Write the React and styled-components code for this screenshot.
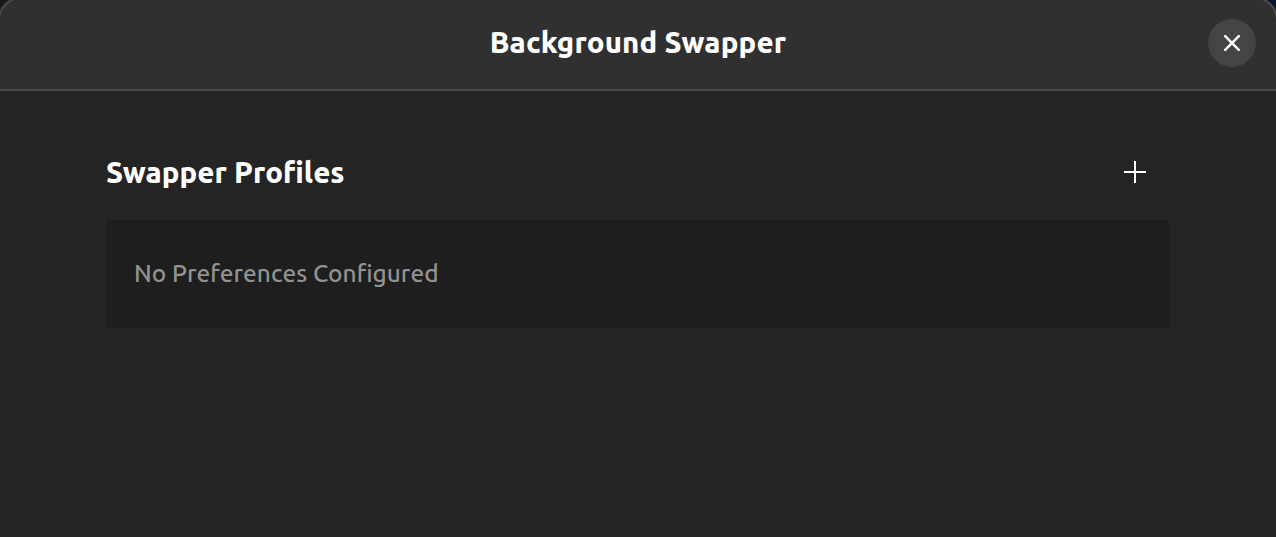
import React from "react";
import styled, { createGlobalStyle } from "styled-components";

const Global = createGlobalStyle`
  * { box-sizing: border-box; }
  body { margin: 0; background: #171717; overflow: hidden; }
`;

const Window = styled.div`
  width: 100%;
  height: 100vh;
  display: flex;
  flex-direction: column;
  background: linear-gradient(90deg, #171717 50%, #07192a 50%);
  overflow: hidden;
  color: #fff;
  font-family: Ubuntu, "Noto Sans", "Open Sans", sans-serif;
`;

const HeaderBar = styled.header`
  height: 94px;
  margin: -3px -2px 0;
  flex: none;
  display: grid;
  grid-template-columns: 48px 1fr 48px;
  justify-items: center;
  align-items: start;
  padding: 22px 22px 0;
  background: #303030;
  box-shadow: inset 0 0 0 2px #4a4a4a;
  border-radius: 23px 23px 0 0;
`;

const Heading = styled.h1`
  grid-column: 2;
  margin: 0;
  white-space: nowrap;
  font-size: 29.33px;
  font-weight: 760;
  letter-spacing: ${(p) => p.$track || 0.16}px;
  line-height: ${(p) => p.$line || 48}px;
  font-feature-settings: "liga" 1;
`;

const EmptyLabel = styled.p`
  margin: 0;
  white-space: nowrap;
  font-size: 24.4px;
  font-weight: 490;
  letter-spacing: 0.04px;
  line-height: 48px;
  font-feature-settings: "liga" 1;
  color: #929292;
`;

const CloseButton = styled.button`
  grid-column: 3;
  width: 48px;
  height: 48px;
  display: grid;
  place-items: center;
  padding: 0;
  border: 0;
  border-radius: 50%;
  background: #444;
  color: #fff;
`;

const Content = styled.main`
  flex: 1;
  padding: 57px 107px 0 106px;
  background: #242424;
`;

const GroupHeader = styled.div`
  height: 72px;
  display: flex;
  justify-content: space-between;
  align-items: flex-start;
`;

const AddButton = styled.button`
  width: 68px;
  height: 48px;
  display: grid;
  place-items: center;
  padding: 0;
  border: 0;
  background: none;
  color: #fff;
`;

const ListPanel = styled.section`
  height: 108px;
  padding: 29px 28px;
  background: #1e1e1e;
`;

export default function App() {
  return (
    <>
      <Global />
      <Window>
        <HeaderBar>
          <Heading>Background Swapper</Heading>
          <CloseButton aria-label="Close">
            <svg width="18" height="18" viewBox="0 0 18 18" fill="none" stroke="currentColor" strokeWidth="2.5" strokeLinecap="round">
              <path d="M2.2 2.2l13.6 13.6M15.8 2.2L2.2 15.8" />
            </svg>
          </CloseButton>
        </HeaderBar>
        <Content>
          <GroupHeader>
            <Heading as="h2" $line={50} $track={0.06}>Swapper Profiles</Heading>
            <AddButton aria-label="Add profile">
              <svg width="24" height="24" viewBox="0 0 24 24" fill="none" stroke="currentColor" strokeWidth="2">
                <path d="M12 1v22M1 12h22" />
              </svg>
            </AddButton>
          </GroupHeader>
          <ListPanel>
            <EmptyLabel>No Preferences Configured</EmptyLabel>
          </ListPanel>
        </Content>
      </Window>
    </>
  );
}
